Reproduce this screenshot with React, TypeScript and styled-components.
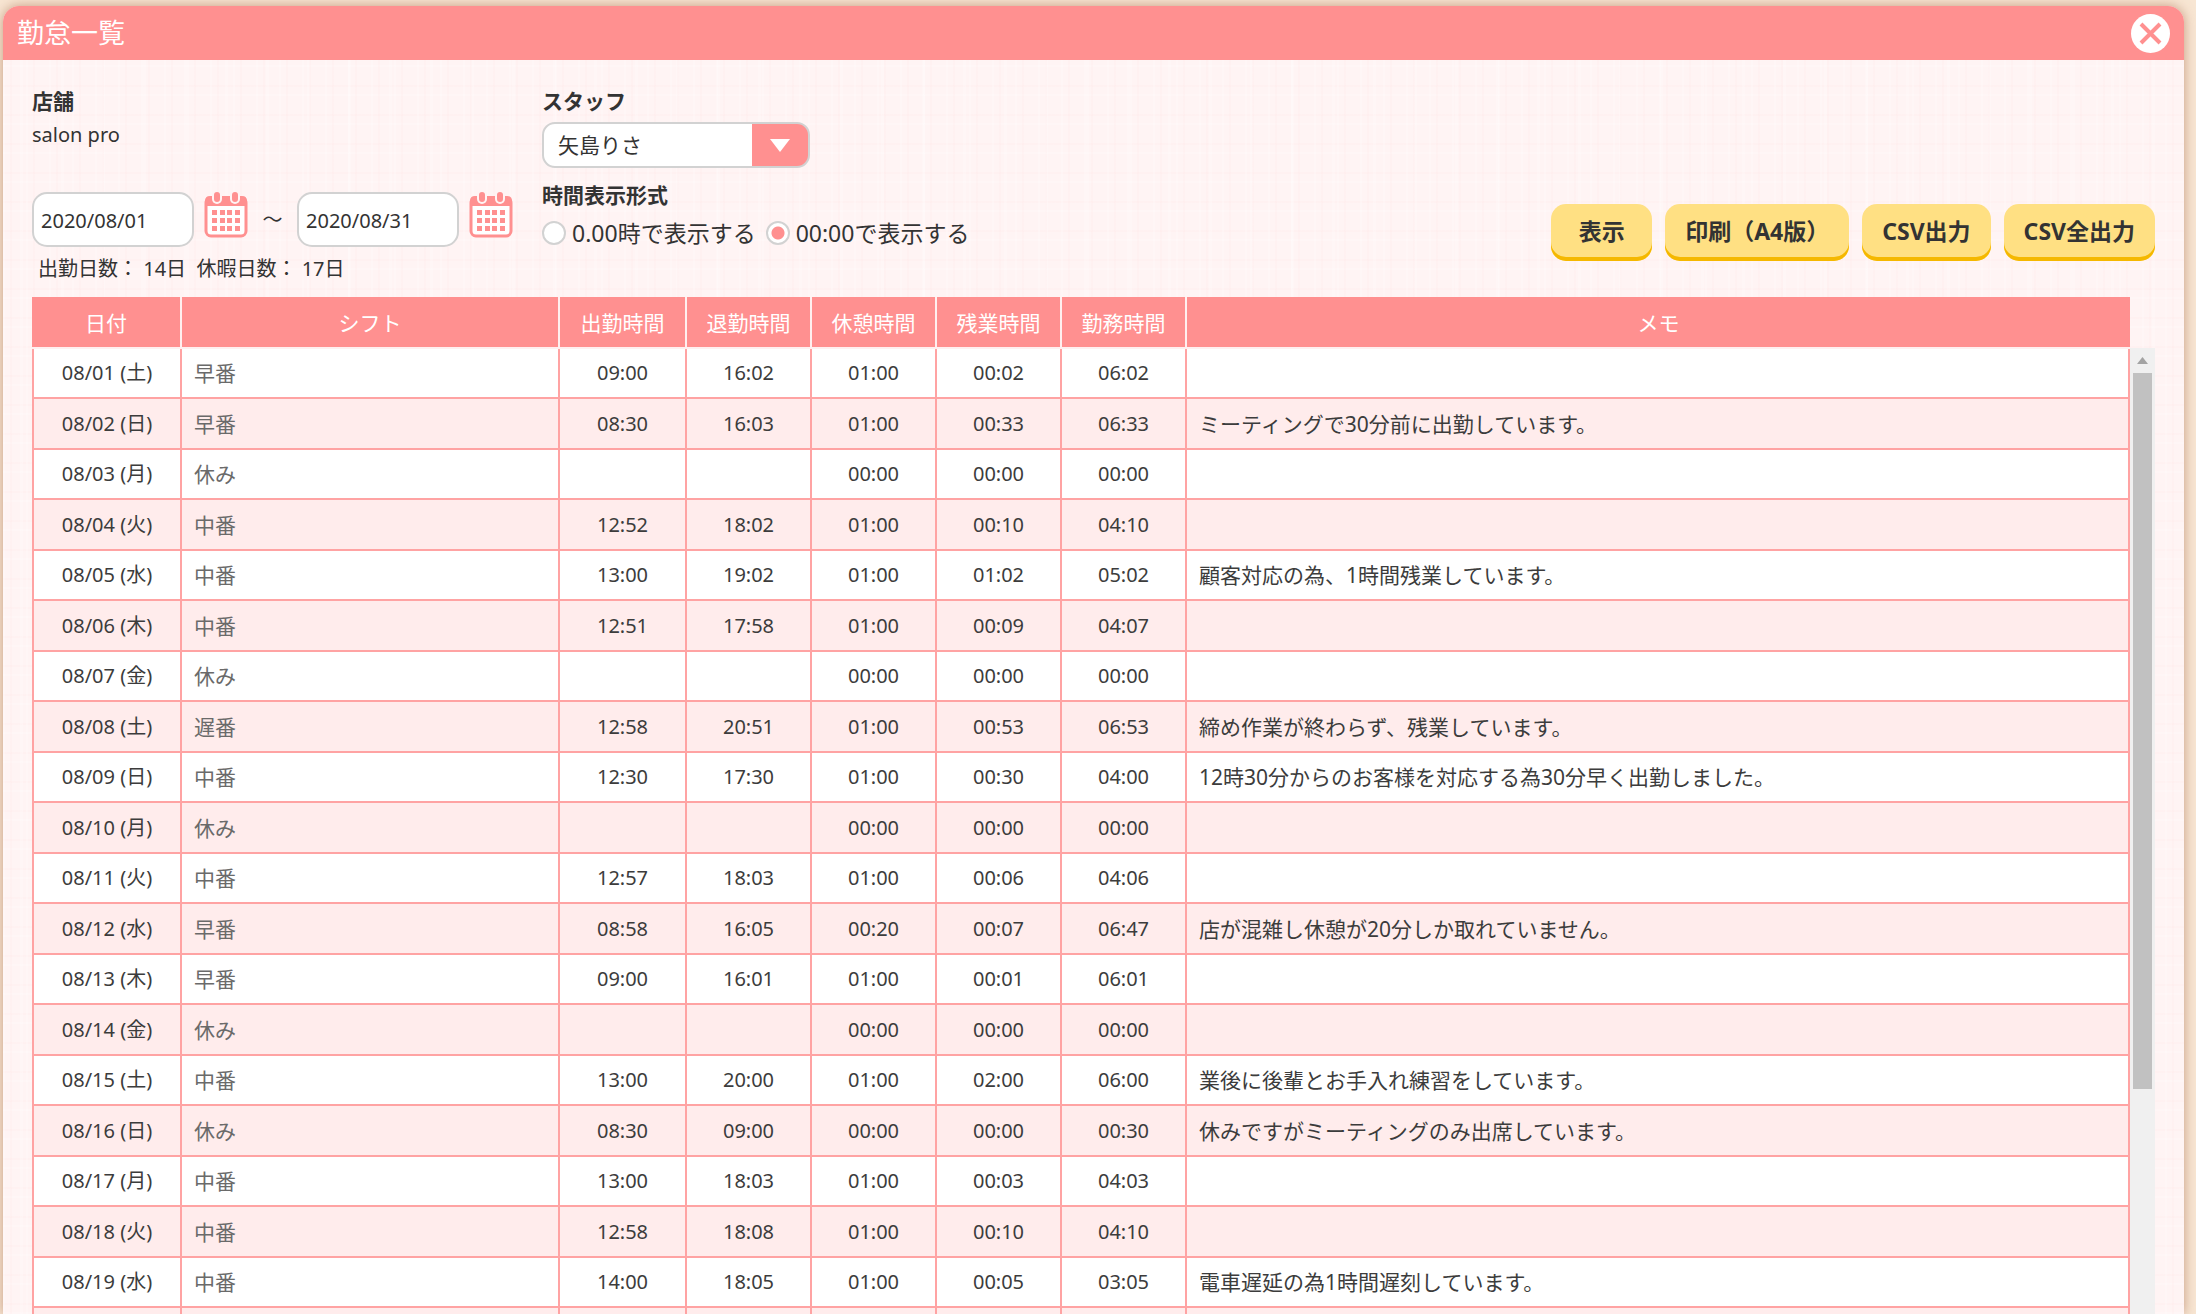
import React, { useState } from "react";
import styled, { createGlobalStyle, css } from "styled-components";

const pink = "#ff9090";
const line = "#ffa3a3";
const ink = "#333333";

const GlobalStyle = createGlobalStyle`
  * { box-sizing: border-box; }
  html, body, #root { height: 100%; }
  body {
    margin: 0;
    overflow: hidden;
    background: #f8e6d3;
    color: ${ink};
    font-family: "Noto Sans", "Noto Sans CJK JP", sans-serif;
    font-size: 20px;
  }
  button, input, select { font: inherit; color: inherit; }
`;

const Page = styled.div`
  height: 100%;
  padding: 6px 12px 0 3px;
`;

const Panel = styled.main`
  height: 100%;
  display: flex;
  flex-direction: column;
  border-radius: 16px 16px 0 0;
  box-shadow: 0 0 12px rgba(150, 80, 50, 0.5);
  background-color: #fff4f4;
  background-image:
    repeating-linear-gradient(90deg, rgba(255, 255, 255, 0.22) 0 2px, transparent 2px 7px, rgba(255, 220, 220, 0.12) 7px 9px, transparent 9px 23px),
    repeating-linear-gradient(90deg, transparent 0 17px, rgba(255, 255, 255, 0.2) 17px 20px, transparent 20px 41px),
    repeating-linear-gradient(0deg, rgba(255, 255, 255, 0.22) 0 2px, transparent 2px 9px, rgba(255, 220, 220, 0.12) 9px 11px, transparent 11px 29px);
`;

const TitleBar = styled.header`
  flex: none;
  height: 54px;
  display: flex;
  align-items: center;
  justify-content: space-between;
  padding: 0 14px;
  border-radius: 16px 16px 0 0;
  background: ${pink};
`;

const Title = styled.h1`
  margin: 0;
  font-size: 27px;
  font-weight: 400;
  line-height: 40px;
  color: #fff;
`;

const CloseButton = styled.button`
  width: 39px;
  height: 39px;
  padding: 0;
  border: 0;
  background: none;
  cursor: pointer;
  svg { display: block; }
`;

const Content = styled.div`
  flex: 1;
  min-height: 0;
  display: flex;
  flex-direction: column;
  padding: 24px 29px 0;
`;

const Filters = styled.section`
  flex: none;
  display: flex;
  align-items: flex-start;
  height: 213px;
`;

const PeriodColumn = styled.div`
  width: 510px;
`;

const Label = styled.div`
  font-size: 21px;
  font-weight: 700;
  line-height: 34px;
`;

const StoreName = styled.div`
  line-height: 34px;
`;

const DateRange = styled.div`
  display: flex;
  align-items: flex-start;
  margin-top: 40px;
`;

const DateInput = styled.input`
  width: 162px;
  height: 55px;
  padding: 2px 7px 0;
  border: 2px solid #d2d2d2;
  border-radius: 15px;
  background: #fff;
`;

const CalendarButton = styled.button`
  margin-left: 10px;
  padding: 0;
  border: 0;
  background: none;
  cursor: pointer;
  svg { display: block; }
`;

const Tilde = styled.span`
  width: 49px;
  line-height: 55px;
  text-align: center;
`;

const Summary = styled.p`
  margin: 5px 0 0 6px;
  line-height: 34px;
  white-space: pre;
`;

const OptionsColumn = styled.div`
  flex: 1;
`;

const SelectBox = styled.div`
  display: grid;
  grid-template-columns: 1fr 56px;
  width: 268px;
  height: 46px;
  margin: 4px 0 10px;
  border: 2px solid #d2d2d2;
  border-radius: 13px;
  background: linear-gradient(${pink}, ${pink}) right / 56px 100% no-repeat #fff;
  overflow: hidden;
  svg {
    grid-area: 1 / 2;
    place-self: center;
    pointer-events: none;
  }
`;

const StaffSelect = styled.select`
  grid-area: 1 / 1 / 2 / 3;
  appearance: none;
  padding: 0 14px;
  border: 0;
  background: transparent;
  font-size: 21px;
`;

const RadioGroup = styled.fieldset`
  margin: 0;
  padding: 0;
  border: 0;
`;

const Legend = styled.legend`
  padding: 0;
  font-size: 21px;
  font-weight: 700;
  line-height: 34px;
`;

const RadioRow = styled.div`
  display: flex;
  gap: 10px;
  padding-top: 4px;
`;

const RadioLabel = styled.label`
  display: flex;
  align-items: center;
  gap: 6px;
  font-size: 23px;
  line-height: 34px;
`;

const Radio = styled.input`
  appearance: none;
  width: 24px;
  height: 24px;
  margin: 0;
  border: 2px solid #d2d2d2;
  border-radius: 50%;
  background: #fff;
  &:checked { background: radial-gradient(circle, ${pink} 6px, #fff 7px); }
`;

const Actions = styled.div`
  display: flex;
  gap: 13px;
  margin-top: 120px;
`;

const ActionButton = styled.button`
  min-width: 101px;
  height: 57px;
  padding: 0 20px 5px;
  border: 0;
  border-radius: 15px;
  background: #ffe083;
  box-shadow: inset 0 -4px 0 #f5b800;
  font-size: 23px;
  font-weight: 700;
  white-space: nowrap;
  cursor: pointer;
`;

const TableArea = styled.section`
  flex: 1;
  min-height: 0;
  display: flex;
  align-items: flex-start;
  overflow: hidden;
`;

const Table = styled.table`
  flex: 1;
  width: 0;
  table-layout: fixed;
  border-collapse: separate;
  border-spacing: 0;
`;

const Col = styled.col<{ $width?: number }>`
  ${({ $width }) => $width && css`width: ${$width}px;`}
`;

const HeadCell = styled.th`
  height: 52px;
  padding: 0;
  border-right: 2px solid #fff0f0;
  border-bottom: 2px solid #fff0f0;
  background: ${pink};
  color: #fff;
  font-size: 21px;
  font-weight: 400;
  &:last-child { border-right: 0; }
`;

const Row = styled.tr`
  height: 50px;
  background: #fff;
  &:nth-child(even) {
    height: 51px;
    background: #ffecec;
  }
`;

const Cell = styled.td<{ $align?: "left" | "center"; $muted?: boolean }>`
  padding: 0 12px;
  border-right: 2px solid ${line};
  border-bottom: 2px solid ${line};
  line-height: 30px;
  text-align: ${({ $align = "center" }) => $align};
  white-space: nowrap;
  color: ${({ $muted }) => ($muted ? "#6a6a6a" : "#3c3c3c")};
  ${({ $align }) => $align === "left" && css`font-size: 21px;`}
  &:first-child { border-left: 2px solid ${line}; }
`;

const Scrollbar = styled.div`
  align-self: stretch;
  width: 25px;
  margin-top: 51px;
  padding: 0 3px;
  background: #f0f0f0;
`;

const ScrollArrow = styled.div`
  display: flex;
  align-items: center;
  justify-content: center;
  height: 25px;
`;

const ScrollThumb = styled.div`
  height: 716px;
  background: #c1c1c1;
`;

function CalendarIcon() {
  return (
    <svg width="44" height="46" viewBox="0 0 44 46" aria-hidden="true">
      <rect x="2" y="6" width="40" height="38" rx="5" fill="#fff" stroke={pink} strokeWidth="3" />
      <path d="M1 14V9q0-5 5-5h32q5 0 5 5v5z" fill={pink} />
      {[13, 31].map((x) => (
        <g key={x}>
          <rect x={x - 5} y="-3" width="10" height="15" rx="5" fill="#fff4f4" />
          <rect x={x - 3} y="0" width="6" height="10" rx="3" fill={pink} />
        </g>
      ))}
      {[18, 26, 34].map((y) =>
        [8, 16, 23, 31].map((x) => (
          <rect key={`${x}-${y}`} x={x} y={y} width="5" height="5" fill={pink} />
        ))
      )}
    </svg>
  );
}

const widths = [150, 378, 127, 125, 125, 125, 125];
const headings = ["日付", "シフト", "出勤時間", "退勤時間", "休憩時間", "残業時間", "勤務時間", "メモ"];

type AttendanceRow = [string, string, string, string, string, string, string, string];

const records: AttendanceRow[] = [
  ["08/01 (土)", "早番", "09:00", "16:02", "01:00", "00:02", "06:02", ""],
  ["08/02 (日)", "早番", "08:30", "16:03", "01:00", "00:33", "06:33", "ミーティングで30分前に出勤しています。"],
  ["08/03 (月)", "休み", "", "", "00:00", "00:00", "00:00", ""],
  ["08/04 (火)", "中番", "12:52", "18:02", "01:00", "00:10", "04:10", ""],
  ["08/05 (水)", "中番", "13:00", "19:02", "01:00", "01:02", "05:02", "顧客対応の為、1時間残業しています。"],
  ["08/06 (木)", "中番", "12:51", "17:58", "01:00", "00:09", "04:07", ""],
  ["08/07 (金)", "休み", "", "", "00:00", "00:00", "00:00", ""],
  ["08/08 (土)", "遅番", "12:58", "20:51", "01:00", "00:53", "06:53", "締め作業が終わらず、残業しています。"],
  ["08/09 (日)", "中番", "12:30", "17:30", "01:00", "00:30", "04:00", "12時30分からのお客様を対応する為30分早く出勤しました。"],
  ["08/10 (月)", "休み", "", "", "00:00", "00:00", "00:00", ""],
  ["08/11 (火)", "中番", "12:57", "18:03", "01:00", "00:06", "04:06", ""],
  ["08/12 (水)", "早番", "08:58", "16:05", "00:20", "00:07", "06:47", "店が混雑し休憩が20分しか取れていません。"],
  ["08/13 (木)", "早番", "09:00", "16:01", "01:00", "00:01", "06:01", ""],
  ["08/14 (金)", "休み", "", "", "00:00", "00:00", "00:00", ""],
  ["08/15 (土)", "中番", "13:00", "20:00", "01:00", "02:00", "06:00", "業後に後輩とお手入れ練習をしています。"],
  ["08/16 (日)", "休み", "08:30", "09:00", "00:00", "00:00", "00:30", "休みですがミーティングのみ出席しています。"],
  ["08/17 (月)", "中番", "13:00", "18:03", "01:00", "00:03", "04:03", ""],
  ["08/18 (火)", "中番", "12:58", "18:08", "01:00", "00:10", "04:10", ""],
  ["08/19 (水)", "中番", "14:00", "18:05", "01:00", "00:05", "03:05", "電車遅延の為1時間遅刻しています。"],
  ["", "", "", "", "", "", "", ""],
];

export default function App() {
  const [from, setFrom] = useState("2020/08/01");
  const [to, setTo] = useState("2020/08/31");
  const [format, setFormat] = useState("clock");

  return (
    <>
      <GlobalStyle />
      <Page>
        <Panel>
          <TitleBar>
            <Title>勤怠一覧</Title>
            <CloseButton aria-label="閉じる">
              <svg width="39" height="39" viewBox="0 0 39 39" aria-hidden="true">
                <circle cx="19.5" cy="19.5" r="19.5" fill="#fff" />
                <path d="M10 10l19 19M29 10L10 29" stroke={pink} strokeWidth="4" />
              </svg>
            </CloseButton>
          </TitleBar>
          <Content>
            <Filters>
              <PeriodColumn>
                <Label>店舗</Label>
                <StoreName>salon pro</StoreName>
                <DateRange>
                  <DateInput aria-label="開始日" value={from} onChange={(e) => setFrom(e.target.value)} />
                  <CalendarButton aria-label="開始日を選ぶ"><CalendarIcon /></CalendarButton>
                  <Tilde>～</Tilde>
                  <DateInput aria-label="終了日" value={to} onChange={(e) => setTo(e.target.value)} />
                  <CalendarButton aria-label="終了日を選ぶ"><CalendarIcon /></CalendarButton>
                </DateRange>
                <Summary>{"出勤日数： 14日  休暇日数： 17日"}</Summary>
              </PeriodColumn>
              <OptionsColumn>
                <Label as="label" htmlFor="staff">スタッフ</Label>
                <SelectBox>
                  <StaffSelect id="staff" defaultValue="矢島りさ">
                    <option>矢島りさ</option>
                  </StaffSelect>
                  <svg width="20" height="13" viewBox="0 0 20 13" aria-hidden="true">
                    <path d="M0 0h20L10 13z" fill="#fff" />
                  </svg>
                </SelectBox>
                <RadioGroup>
                  <Legend>時間表示形式</Legend>
                  <RadioRow>
                    <RadioLabel>
                      <Radio type="radio" name="format" checked={format === "decimal"} onChange={() => setFormat("decimal")} />
                      0.00時で表示する
                    </RadioLabel>
                    <RadioLabel>
                      <Radio type="radio" name="format" checked={format === "clock"} onChange={() => setFormat("clock")} />
                      00:00で表示する
                    </RadioLabel>
                  </RadioRow>
                </RadioGroup>
              </OptionsColumn>
              <Actions>
                <ActionButton>表示</ActionButton>
                <ActionButton>印刷（A4版）</ActionButton>
                <ActionButton>CSV出力</ActionButton>
                <ActionButton>CSV全出力</ActionButton>
              </Actions>
            </Filters>
            <TableArea>
              <Table>
                <colgroup>
                  {widths.map((w, i) => <Col key={i} $width={w} />)}
                  <Col />
                </colgroup>
                <thead>
                  <tr>{headings.map((h) => <HeadCell key={h}>{h}</HeadCell>)}</tr>
                </thead>
                <tbody>
                  {records.map((record, r) => (
                    <Row key={r}>
                      {record.map((text, i) => (
                        <Cell key={i} $align={i === 1 || i === 7 ? "left" : "center"} $muted={i === 1}>{text}</Cell>
                      ))}
                    </Row>
                  ))}
                </tbody>
              </Table>
              <Scrollbar>
                <ScrollArrow>
                  <svg width="11" height="7" viewBox="0 0 11 7" aria-hidden="true">
                    <path d="M0 7L5.5 0 11 7z" fill="#a3a3a3" />
                  </svg>
                </ScrollArrow>
                <ScrollThumb />
              </Scrollbar>
            </TableArea>
          </Content>
        </Panel>
      </Page>
    </>
  );
}
